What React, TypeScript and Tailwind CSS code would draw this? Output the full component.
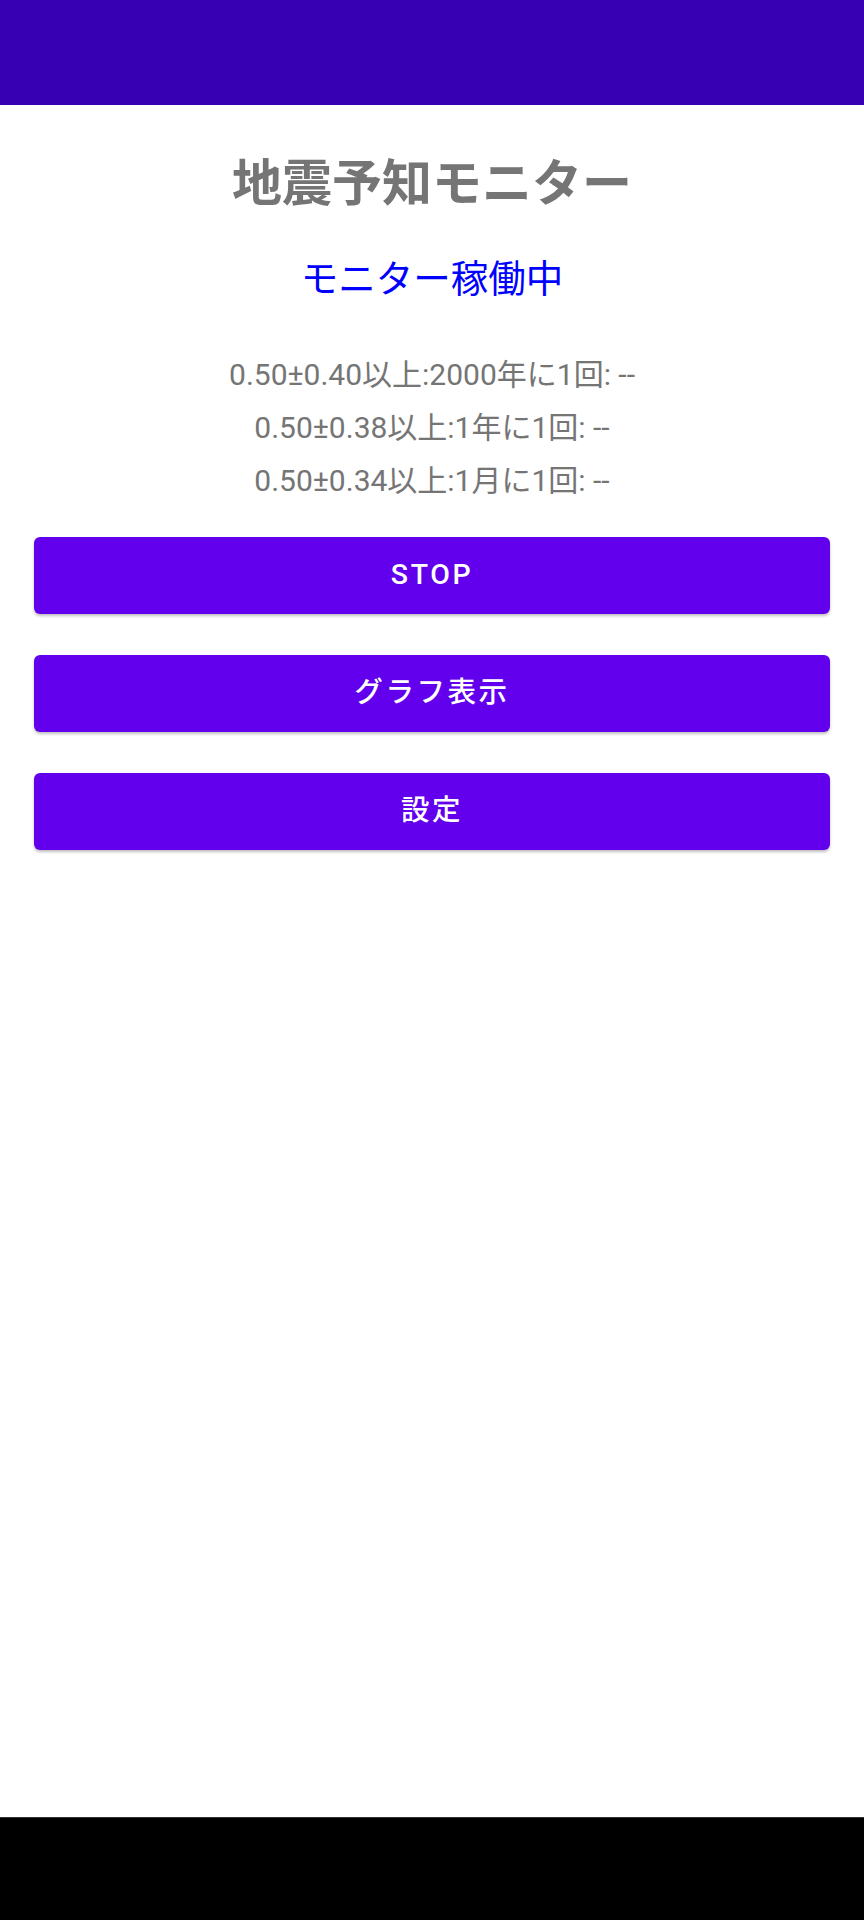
export default function App() {
  const rows = [
    "0.50±0.40以上:2000年に1回: --",
    "0.50±0.38以上:1年に1回: --",
    "0.50±0.34以上:1月に1回: --",
  ];
  const buttons = ["STOP", "グラフ表示", "設定"];

  return (
    <div
      className="flex flex-col h-[1920px] bg-white"
      style={{ fontFamily: 'Roboto, "Noto Sans CJK JP", sans-serif' }}
    >
      {/* app bar */}
      <div className="h-[105px] bg-[#3700B3] shrink-0" />

      <main className="flex-1 flex flex-col items-center">
        <h1
          className="mt-[44px] text-[50px] leading-[60px] font-bold text-[#757575]"
          style={{ fontFamily: '"Noto Sans CJK JP", sans-serif' }}
        >
          地震予知モニター
        </h1>
        <p
          className="mt-[45px] text-[37.5px] leading-[44px] text-[#0000FF]"
          style={{ fontFamily: '"Noto Sans CJK JP", sans-serif' }}
        >
          モニター稼働中
        </p>

        <div className="mt-[50px] flex flex-col items-center text-[30px] leading-[53px] text-[#757575]">
          {rows.map((r) => (
            <p key={r}>{r}</p>
          ))}
        </div>

        <div className="mt-[30px] w-full px-[34px] flex flex-col gap-[41px]">
          {buttons.map((b) => (
            <button
              key={b}
              className="h-[77px] w-full rounded-[6px] bg-[#6200EE] text-white text-[28.5px] font-medium tracking-[0.09em] shadow-[0_2px_3px_rgba(0,0,0,0.25)]"
            >
              {b}
            </button>
          ))}
        </div>
      </main>

      {/* navigation bar */}
      <div className="h-[103px] bg-black border-t border-[#333] shrink-0" />
    </div>
  );
}
